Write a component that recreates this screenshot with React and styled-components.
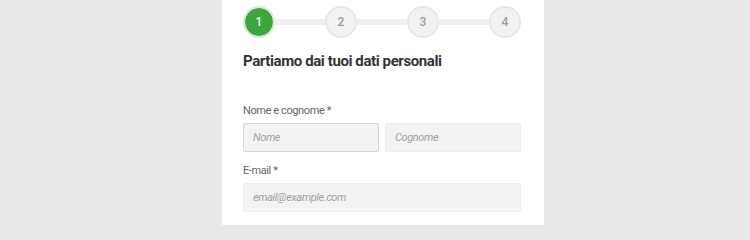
import React from 'react';
import styled, { createGlobalStyle } from 'styled-components';

const GlobalStyle = createGlobalStyle`
    html, body {
        margin: 0;
        padding: 0;
        background: #e8e8e8;
        font-family: Roboto, "Liberation Sans", Arial, sans-serif;
    }
`;

const steps = [1, 2, 3, 4];

const App = () => {
    return (
        <>
            <GlobalStyle />
            <Page>
                <Panel>
                    <Stepper>
                        {steps.map((n, i) => (
                            <React.Fragment key={n}>
                                {i > 0 && <Connector />}
                                <Step $active={n === 1}>{n}</Step>
                            </React.Fragment>
                        ))}
                    </Stepper>
                    <Title>Partiamo dai tuoi dati personali</Title>
                    <Field>
                        <Label>Nome e cognome *</Label>
                        <Row>
                            <Input placeholder="Nome" $focused autoFocus />
                            <Input placeholder="Cognome" />
                        </Row>
                    </Field>
                    <Field>
                        <Label>E-mail *</Label>
                        <Input placeholder="email@example.com" />
                    </Field>
                </Panel>
            </Page>
        </>
    );
};

const Page = styled.div`
    display: flex;
    width: 750px;
    height: 225px;
    overflow: hidden;
`;

const Panel = styled.div`
    width: 322px;
    margin-left: 222px;
    box-sizing: border-box;
    padding: 5px 23px 0 21px;
    background: #fff;
    display: flex;
    flex-direction: column;
`;

const Stepper = styled.div`
    display: flex;
    align-items: center;
    height: 34px;
    flex: none;
`;

const Step = styled.div`
    box-sizing: border-box;
    width: 32px;
    height: 32px;
    border-radius: 50%;
    flex: none;
    display: flex;
    align-items: center;
    justify-content: center;
    font-size: 12px;
    font-weight: 500;
    background: ${p => (p.$active ? '#3ca63c' : '#f2f2f2')};
    border: 2px solid ${p => (p.$active ? '#d4ecd4' : '#e6e6e6')};
    color: ${p => (p.$active ? '#fff' : '#9a9a9a')};
    background-clip: padding-box;
`;

const Connector = styled.div`
    flex: 1;
    height: 6px;
    background: #efefef;
    margin: 0 -1px;
`;

const Title = styled.h2`
    margin: 12px 0 0;
    font-size: 15px;
    font-weight: 700;
    letter-spacing: -0.4px;
    color: #333;
    line-height: 20px;
    flex: none;
`;

const Field = styled.div`
    display: flex;
    flex-direction: column;
    flex: none;
    margin-top: 33px;
    & + & {
        margin-top: 12px;
    }
`;

const Label = styled.label`
    font-size: 11px;
    letter-spacing: -0.4px;
    color: #666;
    line-height: 14px;
    margin-bottom: 5px;
`;

const Row = styled.div`
    display: flex;
    gap: 6px;
`;

const Input = styled.input`
    box-sizing: border-box;
    width: 100%;
    min-width: 0;
    height: 29px;
    padding: 0 9px;
    border: 1px solid ${p => (p.$focused ? '#d6d6d6' : '#ededed')};
    border-radius: 2px;
    background: #f3f3f3;
    font-family: inherit;
    font-size: 11px;
    letter-spacing: -0.4px;
    color: #555;
    outline: none;
    caret-color: #444;
    &::placeholder {
        color: #9e9e9e;
        font-style: italic;
    }
`;

export default App;
